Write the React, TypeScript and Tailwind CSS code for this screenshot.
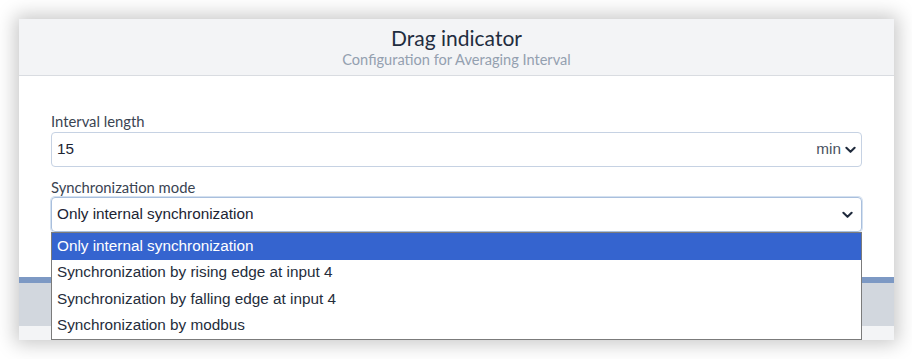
import React from "react";

const Chevron = ({ className }: { className?: string }) => (
  <svg viewBox="0 0 12 8" className={className} fill="none">
    <path d="M1.5 1.5 L6 6 L10.5 1.5" stroke="#1f2a3c" strokeWidth="2.2" strokeLinecap="round" strokeLinejoin="round" />
  </svg>
);

const options = [
  "Only internal synchronization",
  "Synchronization by rising edge at input 4",
  "Synchronization by falling edge at input 4",
  "Synchronization by modbus",
];

const App = () => {
  return (
    <div className="h-[359px] w-[912px] bg-white pl-[19px] pt-[19px]">
      <div className="relative flex h-[321px] w-[875px] flex-col bg-white shadow-[0_0_18px_4px_rgba(0,0,0,0.22)]">
        <header className="flex h-[57px] flex-col items-center border-b border-[#d9dce1] bg-[#f3f4f6] pt-[5px]">
          <h1 className="font-['Lato',sans-serif] text-[21px] leading-[27px] text-[#1f2d3f]">
            Drag indicator
          </h1>
          <p className="font-['Lato',sans-serif] text-[14.6px] leading-[18px] text-[#94a0b0]">
            Configuration for Averaging Interval
          </p>
        </header>
        <div className="flex h-[201px] flex-col px-[32px] pt-[35px]">
          <label className="font-['Lato',sans-serif] text-[14.8px] leading-[21px] text-[#3a4452]">
            Interval length
          </label>
          <div className="flex h-[35px] items-center rounded-[4px] border border-[#c6d2e3] px-[5px] font-['Liberation_Sans',Arial,sans-serif] text-[15.3px] text-[#1c2433]">
            <span className="flex-1">15</span>
            <span className="text-[#4a5261]">min</span>
            <Chevron className="ml-[4px] h-[8px] w-[11px]" />
          </div>
          <label className="mt-[10px] font-['Lato',sans-serif] text-[14.8px] leading-[20px] text-[#3a4452]">
            Synchronization mode
          </label>
          <div className="relative">
            <div className="flex h-[35px] items-center rounded-[4px] border border-[#a9bfdd] px-[5px] font-['Liberation_Sans',Arial,sans-serif] text-[15.3px] text-[#1c2433] shadow-[0_0_0_1px_rgba(170,195,225,0.5)]">
              <span className="flex-1">Only internal synchronization</span>
              <Chevron className="mr-[3px] h-[8px] w-[11px]" />
            </div>
            <ul className="absolute left-0 right-0 top-full z-10 border border-[#7b7b7b] bg-white font-['Liberation_Sans',Arial,sans-serif] text-[15.3px]">
              {options.map((o, i) => (
                <li
                  key={o}
                  className={
                    i === 0
                      ? "flex h-[26.5px] items-center bg-[#3564cf] px-[5px] text-white"
                      : "flex h-[26.5px] items-center px-[5px] text-[#252d3b]"
                  }
                >
                  {o}
                </li>
              ))}
            </ul>
          </div>
        </div>
        <div className="h-[6px] bg-[#7d99c4]" />
        <div className="h-[43px] bg-[#d2d7de]" />
        <div className="relative flex-1 bg-[#f3f4f6]">
          <span className="absolute bottom-0 left-[498px] h-[2px] w-[14px] rounded bg-[#4a6fad]" />
        </div>
      </div>
    </div>
  );
};

export default App;
